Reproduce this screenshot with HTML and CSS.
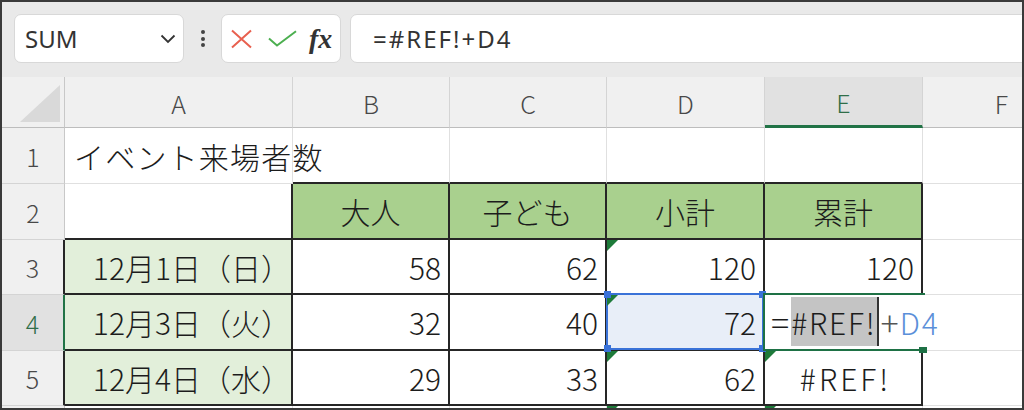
FILE: index.html
```html
<!DOCTYPE html>
<html lang="ja">
<head>
<meta charset="utf-8">
<title>Excel #REF!</title>
<link rel="stylesheet" href="styles.css">
</head>
<body>
<div class="frame">
  <div class="toolbar">
    <div class="namebox">
      <span class="name">SUM</span>
      <svg class="chev" width="16" height="10" viewBox="0 0 16 10"><polyline points="1.5,1.5 8,8 14.5,1.5"/></svg>
    </div>
    <div class="kebab"><i></i><i></i><i></i></div>
    <div class="btns">
      <svg class="ico-x" width="23" height="20" viewBox="0 0 23 20"><path d="M2 1.5 L21 18.5 M21 1.5 L2 18.5"/></svg>
      <svg class="ico-ok" width="29" height="17" viewBox="0 0 29 17"><path d="M1 8.5 L9 15.5 L28 1.2"/></svg>
      <span class="fx">fx</span>
    </div>
    <div class="formula">=#REF!+D4</div>
  </div>

  <div class="sheet">
    <!-- header row -->
    <div class="corner"><svg width="40" height="37" viewBox="0 0 40 37"><polygon points="40,0 40,37 0,37"/></svg></div>
    <div class="ch">A</div>
    <div class="ch">B</div>
    <div class="ch">C</div>
    <div class="ch">D</div>
    <div class="ch ch-sel">E</div>
    <div class="ch">F</div>

    <!-- row 1 -->
    <div class="rh">1</div>
    <div class="c title">イベント来場者数</div>
    <div class="c bb"></div>
    <div class="c bb"></div>
    <div class="c bb"></div>
    <div class="c bb"></div>
    <div class="c"></div>

    <!-- row 2 -->
    <div class="rh">2</div>
    <div class="c bb br"></div>
    <div class="c hd">大人</div>
    <div class="c hd">子ども</div>
    <div class="c hd">小計</div>
    <div class="c hd">累計</div>
    <div class="c"></div>

    <!-- row 3 -->
    <div class="rh rh-b">3</div>
    <div class="c date">12月1日（日）</div>
    <div class="c num">58</div>
    <div class="c num">62</div>
    <div class="c num err">120</div>
    <div class="c num">120</div>
    <div class="c"></div>

    <!-- row 4 -->
    <div class="rh rh-sel">4</div>
    <div class="c date">12月3日（火）</div>
    <div class="c num">32</div>
    <div class="c num">40</div>
    <div class="c num err refsel">72<i class="h h1"></i><i class="h h2"></i><i class="h h3"></i><i class="h h4"></i></div>
    <div class="c edit"><span class="eq">=</span><span class="ref">#REF!</span><span class="plus">+</span><span class="d4">D4</span><i class="fill"></i></div>
    <div class="c"></div>

    <!-- row 5 -->
    <div class="rh rh-b">5</div>
    <div class="c date">12月4日（水）</div>
    <div class="c num">29</div>
    <div class="c num">33</div>
    <div class="c num err">62</div>
    <div class="c num mid err"><span class="refv">#REF!</span></div>
    <div class="c"></div>

    <!-- row 6 (partially visible) -->
    <div class="rh"></div>
    <div class="c"></div>
    <div class="c"></div>
    <div class="c"></div>
    <div class="c err"></div>
    <div class="c err"></div>
    <div class="c"></div>
  </div>
</div>
</body>
</html>
```

FILE: styles.css
```css
* { box-sizing: border-box; margin: 0; padding: 0; }

body { margin: 0; background: #ffffff; }

.frame {
  width: 1024px;
  height: 410px;
  border: 2px solid #3a3a3a;
  overflow: hidden;
  background: #ffffff;
  display: flex;
  flex-direction: column;
}

/* ---------- toolbar ---------- */
.toolbar {
  height: 75px;
  flex: none;
  background: #e9e9e9;
  display: flex;
  align-items: flex-start;
  padding: 12px 0 0 12px;
}

.namebox {
  flex: none;
  width: 170px;
  height: 49px;
  background: #ffffff;
  border: 1px solid #d8d8d8;
  border-radius: 7px;
  display: flex;
  align-items: center;
  justify-content: space-between;
  padding: 0 7px 0 10px;
}

.name {
  font-family: "Noto Sans", sans-serif;
  font-size: 24px;
  color: #333333;
}

.chev polyline { fill: none; stroke: #333333; stroke-width: 1.8; }

.kebab {
  flex: none;
  width: 37px;
  height: 49px;
  display: flex;
  flex-direction: column;
  align-items: center;
  justify-content: center;
  gap: 2.5px;
}
.kebab i { display: block; width: 4px; height: 4px; border-radius: 50%; background: #444444; }

.btns {
  flex: none;
  width: 120px;
  height: 49px;
  background: #ffffff;
  border: 1px solid #d8d8d8;
  border-radius: 7px;
  display: flex;
  align-items: center;
  padding-left: 8px;
}
.ico-x path { fill: none; stroke: #e8604f; stroke-width: 2; }
.ico-ok { margin-left: 15px; }
.ico-ok path { fill: none; stroke: #4caf50; stroke-width: 2; }
.fx {
  margin-left: 12px;
  font-family: "Liberation Serif", serif;
  font-style: italic;
  font-weight: bold;
  font-size: 28px;
  color: #333333;
  line-height: 1;
}

.formula {
  flex: 1;
  margin-left: 9px;
  margin-right: -12px;
  height: 49px;
  background: #ffffff;
  border: 1px solid #d8d8d8;
  border-radius: 7px;
  display: flex;
  align-items: center;
  padding-left: 22px;
  font-family: "Noto Sans", sans-serif;
  font-size: 24px;
  letter-spacing: 2px;
  color: #333333;
}

/* ---------- sheet ---------- */
.sheet {
  display: grid;
  grid-template-columns: 63px 228px 157px 157px 158px 158px 158px;
  grid-template-rows: 51px 56px 56px 55px 56px 55px 56px;
  font-family: "Noto Sans CJK JP", sans-serif;
  font-weight: 300;
  color: #1c1c1c;
}

.corner {
  background: #f0f0f0;
  border-right: 1px solid #c8c8c8;
  border-bottom: 1px solid #bdbdbd;
  display: flex;
  align-items: flex-end;
  justify-content: flex-end;
  padding: 0 4px 5px 0;
}
.corner polygon { fill: #d9d9d9; }

.ch {
  background: #f0f0f0;
  border-right: 1px solid #d4d4d4;
  border-bottom: 1px solid #bdbdbd;
  display: flex;
  align-items: center;
  justify-content: center;
  font-size: 25px;
  color: #484848;
  padding-top: 2px;
}
.ch-sel {
  background: #e1e1e1;
  border-bottom: 3px solid #217346;
  color: #2f6e48;
}

.rh {
  background: #f0f0f0;
  border-right: 1px solid #c8c8c8;
  border-bottom: 1px solid #d4d4d4;
  display: flex;
  align-items: center;
  justify-content: center;
  font-size: 25px;
  color: #484848;
}
.rh-b { border-right: 2px solid #262626; }
.rh-sel {
  background: #e1e1e1;
  border-right: 2px solid #217346;
  color: #2f6e48;
}

.c {
  position: relative;
  background: #ffffff;
  border-right: 1px solid #e0e0e0;
  border-bottom: 1px solid #e0e0e0;
  display: flex;
  align-items: center;
  font-size: 30px;
  line-height: 1;
  white-space: nowrap;
}

.bb { border-bottom: 2px solid #262626; }
.br { border-right: 2px solid #262626; }

.title { padding-left: 9px; z-index: 1; overflow: visible; letter-spacing: 1.2px; }

.hd {
  background: #a9d08e;
  border-right: 2px solid #262626;
  border-bottom: 2px solid #262626;
  justify-content: center;
}

.date {
  background: #e2efda;
  border-right: 2px solid #262626;
  border-bottom: 2px solid #262626;
  justify-content: flex-end;
  padding-right: 0;
}

.num {
  border-right: 2px solid #262626;
  border-bottom: 2px solid #262626;
  justify-content: flex-end;
  padding-right: 7px;
}
.mid { justify-content: center; padding-right: 0; }
.refv { letter-spacing: 3px; padding-left: 5px; }

/* error indicator triangle */
.err::before {
  content: "";
  position: absolute;
  top: 0;
  left: 0;
  border-top: 11px solid #1e7b3a;
  border-right: 11px solid transparent;
  z-index: 1;
}

/* referenced cell D4 */
.refsel {
  background: #e8eef8;
  z-index: 2;
}
.refsel::after {
  content: "";
  position: absolute;
  top: -2px;
  left: -1px;
  right: -1px;
  bottom: -1px;
  border: 2px solid #3a72d8;
}
.h {
  position: absolute;
  width: 7px;
  height: 7px;
  background: #3a72d8;
  z-index: 3;
}
.h1 { top: -4px; left: -3px; }
.h2 { top: -4px; right: -3px; }
.h3 { bottom: -3px; left: -3px; }
.h4 { bottom: -3px; right: -3px; }

/* cell being edited E4 */
.edit {
  z-index: 4;
  border-right: none;
  border-bottom: 2px solid #262626;
  padding-left: 6px;
  align-items: stretch;
  overflow: visible;
}
.edit::before {
  content: "";
  position: absolute;
  top: -2px;
  left: -2px;
  width: 160px;
  bottom: -2px;
  border-top: 2px solid #1e7145;
  border-bottom: 2px solid #1e7145;
  border-left: 2px solid #1e7145;
  pointer-events: none;
}
.edit span { display: flex; align-items: center; }
.eq { color: #1c1c1c; font-size: 34px; letter-spacing: 2px; }
.ref {
  margin: 2px 0 3px;
  background: #c4c4c4;
  border-right: 2px solid #333333;
  letter-spacing: 1.8px;
}
.plus { color: #555555; margin-left: 2px; font-size: 34px; letter-spacing: 1px; }
.d4 { color: #5b8fd9; letter-spacing: 2px; }
.fill {
  position: absolute;
  right: -4px;
  bottom: -4px;
  width: 8px;
  height: 6px;
  background: #1e7145;
  z-index: 5;
}
```
